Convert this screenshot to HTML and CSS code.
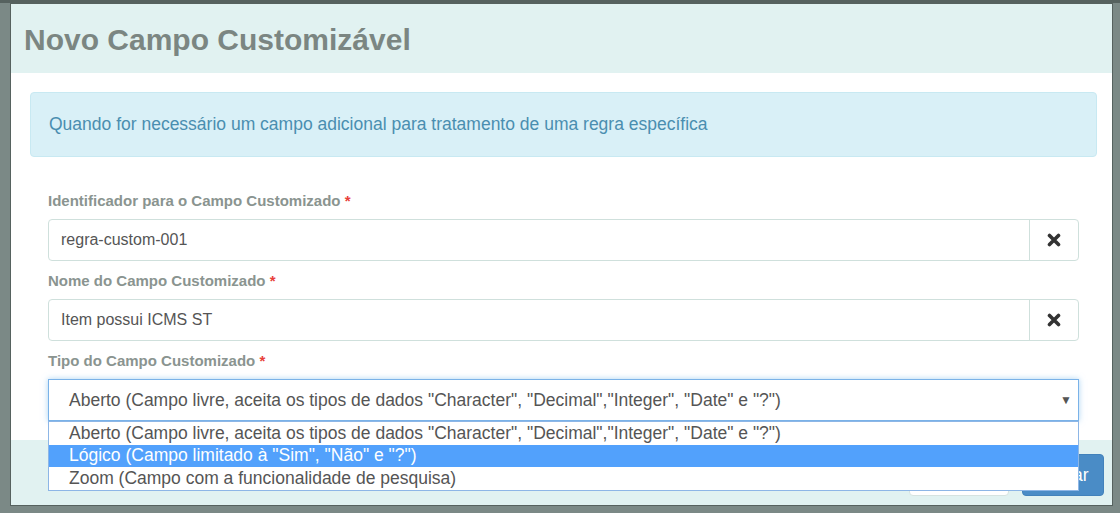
FILE: index.html
```html
<!DOCTYPE html>
<html lang="pt-BR">
<head>
<meta charset="utf-8">
<title>Novo Campo Customizável</title>
<link rel="stylesheet" href="styles.css">
</head>
<body>
<div class="backdrop">
  <div class="modal">
    <div class="modal-header">
      <h4 class="modal-title">Novo Campo Customizável</h4>
    </div>
    <div class="modal-body">
      <div class="alert">Quando for necessário um campo adicional para tratamento de uma regra específica</div>
      <div class="form">
        <div class="form-group">
          <label class="label">Identificador para o Campo Customizado <span class="req">*</span></label>
          <div class="input-group">
            <div class="input">regra-custom-001</div>
            <div class="addon">
              <svg width="14" height="14" viewBox="0 0 14 14"><path d="M2.5 2.5 L11.5 11.5 M11.5 2.5 L2.5 11.5" stroke="#333" stroke-width="3.6" stroke-linecap="round"/></svg>
            </div>
          </div>
        </div>
        <div class="form-group">
          <label class="label">Nome do Campo Customizado <span class="req">*</span></label>
          <div class="input-group">
            <div class="input">Item possui ICMS ST</div>
            <div class="addon">
              <svg width="14" height="14" viewBox="0 0 14 14"><path d="M2.5 2.5 L11.5 11.5 M11.5 2.5 L2.5 11.5" stroke="#333" stroke-width="3.6" stroke-linecap="round"/></svg>
            </div>
          </div>
        </div>
        <div class="form-group">
          <label class="label">Tipo do Campo Customizado <span class="req">*</span></label>
          <div class="select-wrap">
            <div class="select">
              <span>Aberto (Campo livre, aceita os tipos de dados "Character", "Decimal","Integer", "Date" e "?")</span>
              <span class="caret">▼</span>
            </div>
            <ul class="options">
              <li class="option">Aberto (Campo livre, aceita os tipos de dados "Character", "Decimal","Integer", "Date" e "?")</li>
              <li class="option selected">Lógico (Campo limitado à "Sim", "Não" e "?")</li>
              <li class="option">Zoom (Campo com a funcionalidade de pesquisa)</li>
            </ul>
          </div>
        </div>
      </div>
    </div>
    <div class="modal-footer">
      <button class="btn btn-default">Cancelar</button>
      <button class="btn btn-primary">Salvar</button>
    </div>
  </div>
</div>
</body>
</html>
```

FILE: styles.css
```css
* { box-sizing: border-box; }
html, body { margin: 0; padding: 0; }
body {
  font-family: "Liberation Sans", Arial, sans-serif;
  background: #7b8986;
  width: 1120px;
  height: 513px;
  overflow: hidden;
}
.backdrop {
  height: 513px;
  padding: 3px 0 0 10px;
  background: linear-gradient(#56625f 0 3px, #7b8986 3px);
}
.modal {
  width: 1103px;
  height: 503px;
  background: #fff;
  border: 1px solid #56625f;
  display: flex;
  flex-direction: column;
}
.modal-header {
  height: 69px;
  background: #e1f2f1;
  padding: 0 13px;
  display: flex;
  align-items: center;
}
.modal-title {
  margin: 0;
  font-size: 30px;
  font-weight: bold;
  color: #7b8682;
  padding-top: 2px;
}
.modal-body {
  height: 367px;
  padding: 19px 15px 0 19px;
}
.alert {
  height: 65px;
  background: #d9f0f7;
  border: 1px solid #c8e9f2;
  border-radius: 4px;
  padding: 0 18px;
  display: flex;
  align-items: center;
  font-size: 17.5px;
  color: #4a8eb0;
}
.form {
  padding: 24px 18px 0 18px;
}
.form-group {
  margin-top: 10px;
}
.label {
  display: block;
  font-size: 15px;
  font-weight: bold;
  color: #8a9490;
  line-height: 20px;
  margin-bottom: 8px;
}
.req { color: #e8403a; }
.input-group {
  display: flex;
  height: 42px;
  border: 1px solid #cfe0dc;
  border-radius: 4px;
}
.input {
  flex: 1;
  padding: 0 12px;
  display: flex;
  align-items: center;
  font-size: 16px;
  color: #555;
}
.addon {
  width: 49px;
  border-left: 1px solid #cfe0dc;
  display: flex;
  align-items: center;
  justify-content: center;
}
.select-wrap {
  position: relative;
}
.select {
  height: 42px;
  border: 1px solid #7ab2e8;
  box-shadow: 0 0 6px rgba(102, 175, 233, 0.55);
  display: flex;
  align-items: center;
  justify-content: space-between;
  padding: 0 6px 0 20px;
  font-size: 17.5px;
  color: #555;
}
.caret {
  font-size: 12px;
  color: #555;
}
.options {
  position: absolute;
  left: 0;
  right: 0;
  top: 42px;
  margin: 0;
  padding: 0;
  list-style: none;
  background: #fff;
  border: 1px solid #8db6e6;
  z-index: 2;
}
.option {
  height: 23px;
  line-height: 22px;
  padding-left: 20px;
  font-size: 17.5px;
  color: #555;
}
.option.selected {
  height: 22px;
  line-height: 21px;
  background: #52a1fc;
  color: #fff;
}
.modal-footer {
  flex: 1;
  background: #e1f2f1;
  display: flex;
  justify-content: flex-end;
  align-items: flex-end;
  gap: 13px;
  padding: 0 8px 9px 0;
}
.btn {
  height: 42px;
  border-radius: 4px;
  font-family: "Liberation Sans", Arial, sans-serif;
  font-size: 17.5px;
  padding: 0 16px;
}
.btn-default {
  width: 100px;
  background: #fff;
  border: 1px solid #d6e3e0;
  color: #333;
}
.btn-primary {
  width: 82px;
  background: #4a8cc6;
  border: 1px solid #4282bb;
  color: #fff;
}
```
